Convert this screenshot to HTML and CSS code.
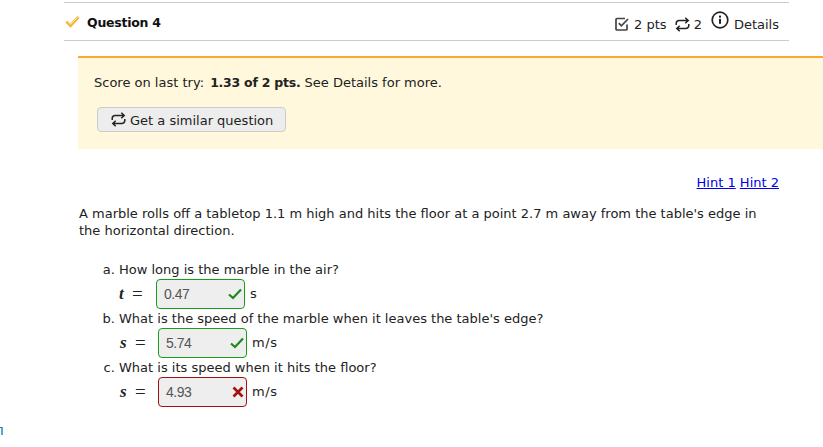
FILE: index.html
```html
<!DOCTYPE html>
<html lang="en">
<head>
  <meta charset="UTF-8" />
  <title>Question 4</title>
  <link rel="stylesheet" href="styles.css">
</head>
<body>

<!-- Question header -->
<div class="header">
  <div class="title">
    <svg class="score-icon" width="15" height="13" viewBox="0 0 15 13"><path d="M1.5 6.5 L5.5 10.5 L13.5 2" fill="none" stroke="#f5b335" stroke-width="3"/><path d="M2.5 6.5 L5.5 9.3 L12.5 2.3" fill="none" stroke="#ffeeb8" stroke-width="0.9"/></svg>
    <span>Question 4</span>
  </div>
  <div class="meta">
    <svg class="box" width="14" height="14" viewBox="0 0 14 14"><path d="M12 7.5 V12 a1 1 0 0 1 -1 1 H2 a1 1 0 0 1 -1 -1 V2.5 a1 1 0 0 1 1 -1 H10" fill="none" stroke="#444" stroke-width="1.7"/><path d="M3.8 6.2 L6.4 8.8 L13 2" fill="none" stroke="#444" stroke-width="1.7"/></svg>
    <span class="pts">2 pts</span>
    <svg class="retry" width="15" height="15" viewBox="0 0 15 15"><path d="M1.2 8 V6.5 a3 3 0 0 1 3 -3 H13 M10.3 0.8 L13.2 3.5 L10.3 6.2 M13.8 7 V8.5 a3 3 0 0 1 -3 3 H2 M4.7 8.8 L1.8 11.5 L4.7 14.2" fill="none" stroke="#222" stroke-width="1.5"/></svg>
    <span class="tries">2</span>
    <svg class="info" width="18" height="18" viewBox="0 0 18 18"><circle cx="9" cy="9" r="7.8" fill="none" stroke="#222" stroke-width="1.7"/><rect x="8" y="7.8" width="2" height="5" fill="#222"/><rect x="8" y="4.6" width="2" height="2" fill="#222"/></svg>
    <span>Details</span>
  </div>
</div>

<!-- Score box -->
<div class="notice">
  <p>Score on last try: <b>1.33 of 2 pts.</b> See Details for more.</p>
  <button class="similar">
    <svg width="15" height="15" viewBox="0 0 15 15"><path d="M1.2 8 V6.5 a3 3 0 0 1 3 -3 H13 M10.3 0.8 L13.2 3.5 L10.3 6.2 M13.8 7 V8.5 a3 3 0 0 1 -3 3 H2 M4.7 8.8 L1.8 11.5 L4.7 14.2" fill="none" stroke="#222" stroke-width="1.5"/></svg>
    <span class="similar-label">Get a similar question</span>
  </button>
</div>

<div class="hints"><a href="#">Hint 1</a> <a href="#">Hint 2</a></div>

<p class="text">A marble rolls off a tabletop 1.1 m high and hits the floor at a point 2.7 m away from the table's edge in the horizontal direction.</p>

<ol class="parts">
  <li>
    How long is the marble in the air?
    <div class="answer first">
      <span class="var"><i>t</i><span class="eq">=</span></span>
      <span class="field ok">0.47<svg width="14" height="12" viewBox="0 0 14 12"><path d="M1 6.5 L5 10 L13 1.5" fill="none" stroke="#1c8a1c" stroke-width="2.2"/></svg></span>
      <span class="unit">s</span>
    </div>
  </li>
  <li>
    What is the speed of the marble when it leaves the table's edge?
    <div class="answer">
      <span class="var"><i>s</i><span class="eq">=</span></span>
      <span class="field ok">5.74<svg width="14" height="12" viewBox="0 0 14 12"><path d="M1 6.5 L5 10 L13 1.5" fill="none" stroke="#1c8a1c" stroke-width="2.2"/></svg></span>
      <span class="unit">m/s</span>
    </div>
  </li>
  <li>
    What is its speed when it hits the floor?
    <div class="answer">
      <span class="var"><i>s</i><span class="eq">=</span></span>
      <span class="field bad">4.93<svg width="12" height="12" viewBox="0 0 12 12"><path d="M1.5 1.5 L10.5 10.5 M10.5 1.5 L1.5 10.5" fill="none" stroke="#a01010" stroke-width="2.6"/></svg></span>
      <span class="unit">m/s</span>
    </div>
  </li>
</ol>

<!-- bit of the next page that peeks in at the left edge -->
<div class="peek"></div>

</body>
</html>
```

FILE: styles.css
```css
html, body {
  margin: 0;
  padding: 0;
  height: 100%;
  overflow: hidden;
  background: white;
  color: #222;
  font-family: 'DejaVu Sans', Verdana, sans-serif;
  font-size: 13px;
}

b, .title {
  font-size: 12.5px;
  font-weight: bold;
  letter-spacing: -0.25px;
}

b {
  margin-left: 2px;
}

.header {
  display: flex;
  justify-content: space-between;
  align-items: center;
  margin: 2px 34px 0 64px;
  height: 37px;
  border-top: 1px solid #ccc;
  border-bottom: 1px solid #ccc;
}

.title {
  display: flex;
  align-items: center;
  padding-top: 2px;
  color: #111;
}

.score-icon {
  margin: -3px 7px 0 1px;
}

.meta {
  display: flex;
  align-items: center;
  margin-right: 10px;
  padding-top: 6px;
}

.meta .box { margin-top: -2px; }
.meta .pts { margin: 0 8px 0 5px; }
.meta .retry { margin-top: -1px; }
.meta .tries { margin: 0 9px 0 4px; }
.meta .info { margin: -10px 5px 0 0; }

.notice {
  margin: 15px 0 0 78px;
  height: 91px;
  background: #fff8dc;
  border-top: 2px solid #f9a92f;
  padding-left: 16px;
  overflow: hidden;
}

.notice p {
  margin: 17px 0 0 0;
  line-height: 16px;
}

.similar {
  display: flex;
  align-items: center;
  gap: 4px;
  margin: 16px 0 0 3px;
  width: 189px;
  height: 25px;
  padding: 0 0 0 13px;
  background: #ededed;
  border: 1px solid #ccc;
  border-radius: 4px;
  color: #222;
  font: inherit;
}

.similar-label {
  padding-top: 2px;
}

.hints {
  text-align: right;
  margin: 26px 44px 0 0;
  line-height: 16px;
}

.hints a { color: #0000ee; }

.text {
  margin: 14px 60px 0 79px;
  line-height: 17px;
}

.parts {
  list-style: lower-alpha;
  margin: 23px 0 0 0;
  padding: 0 0 0 119px;
}

.parts li {
  line-height: 16px;
  margin-bottom: 1px;
}

.answer {
  display: flex;
  align-items: center;
  height: 32px;
}

.var {
  display: flex;
  align-items: center;
  width: 39px;
  padding-left: 1px;
  box-sizing: border-box;
  font-family: 'Liberation Serif', serif;
}

.var i {
  width: 15px;
  font-size: 17px;
  font-weight: bold;
}

.var .eq {
  font-size: 19px;
  font-weight: normal;
}

.answer.first .var { width: 37px; padding-left: 0; }
.answer.first .var i { width: 13px; }

.field {
  display: flex;
  align-items: center;
  justify-content: space-between;
  box-sizing: border-box;
  width: 89px;
  height: 30px;
  padding: 0 2px 0 7px;
  background: #eee;
  border-radius: 4px;
  color: #555;
  font-family: 'Liberation Sans', sans-serif;
  font-size: 14px;
  letter-spacing: -0.5px;
}

.field.ok { border: 1.5px solid #1c9a1c; }
.field.bad { border: 1.5px solid #a01010; }

.unit {
  margin-left: 5px;
  letter-spacing: 0.6px;
}

.peek {
  position: absolute;
  left: 0;
  top: 427px;
  width: 1px;
  height: 7px;
  border-top: 1px solid #2f6f9f;
  border-right: 2px solid #5aa7d0;
}
```
